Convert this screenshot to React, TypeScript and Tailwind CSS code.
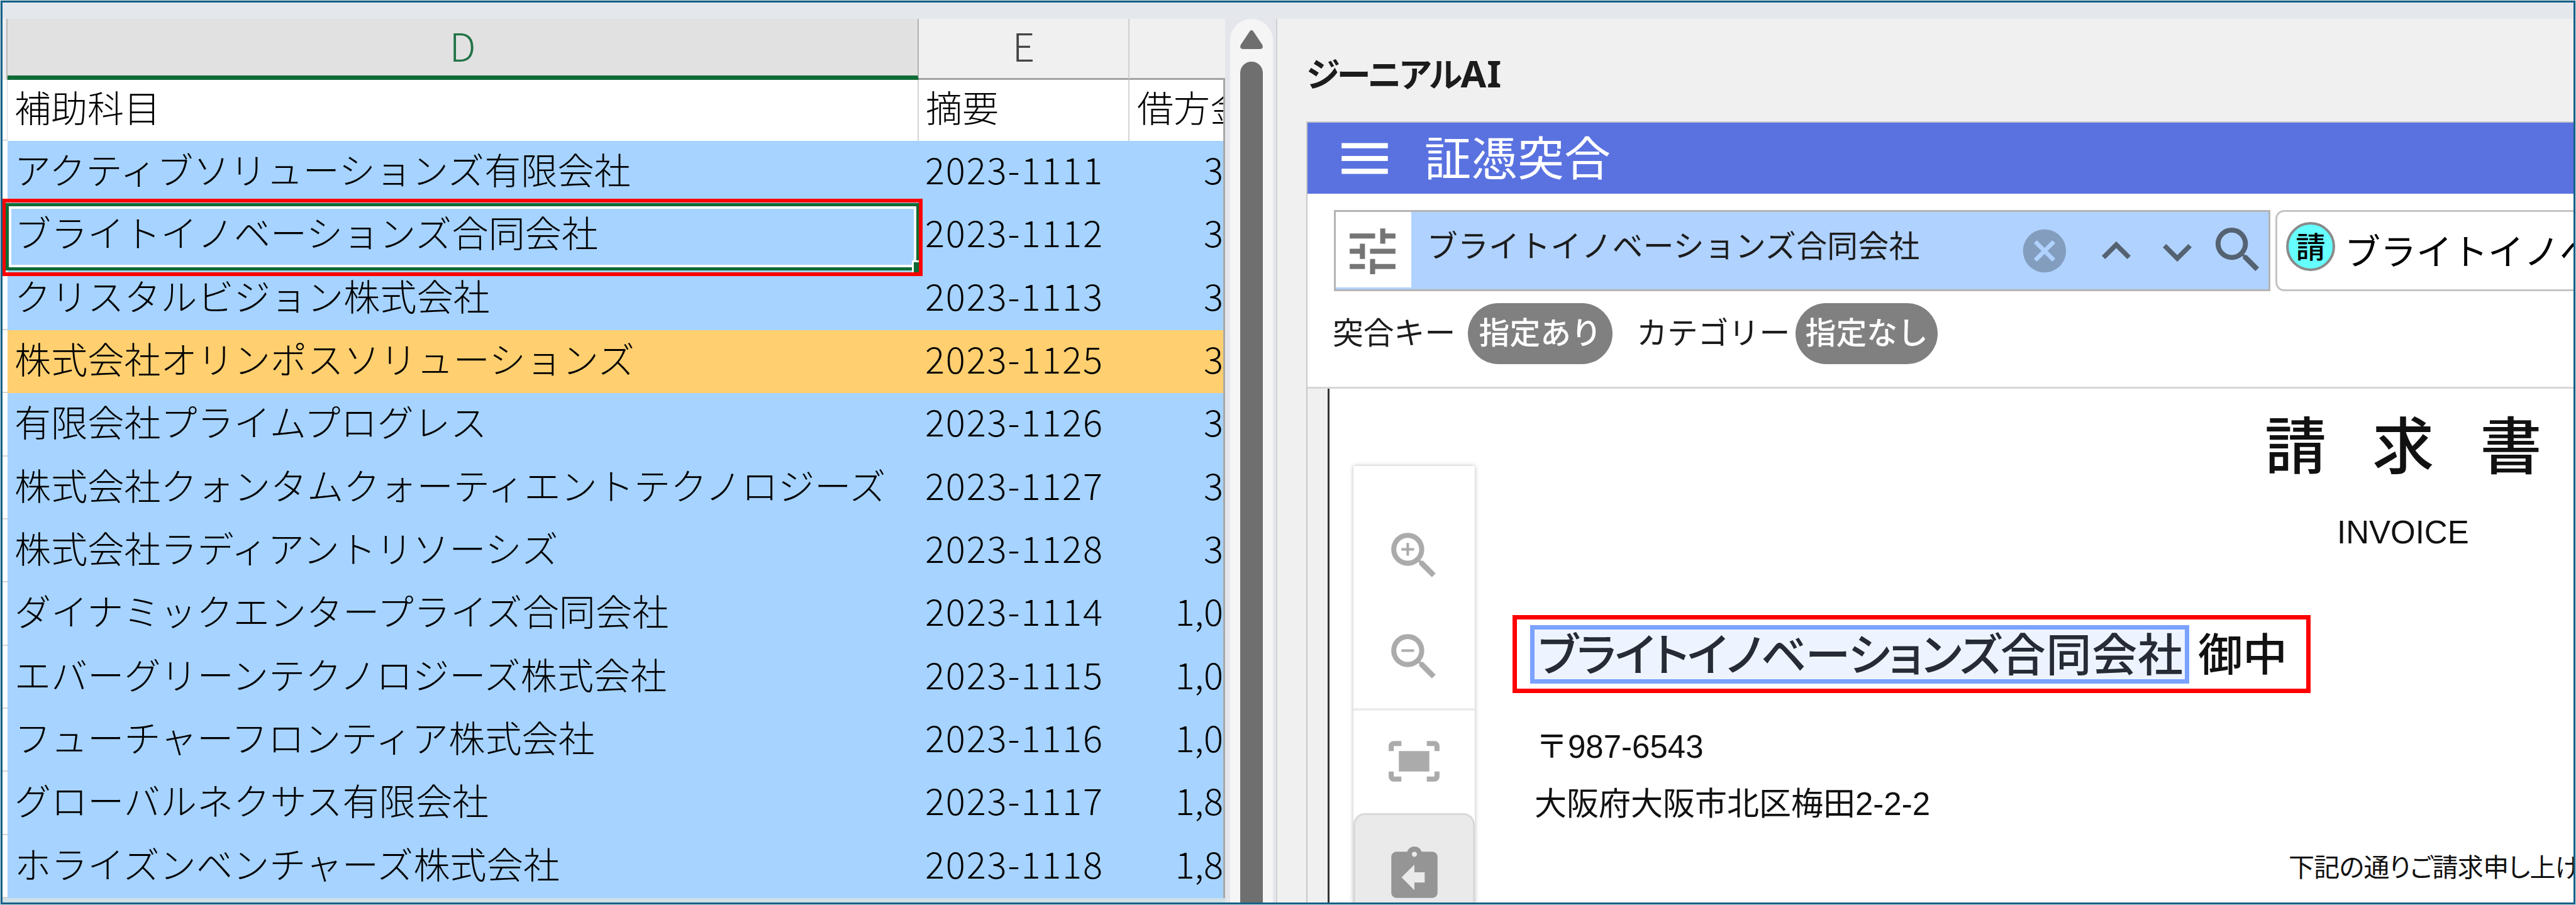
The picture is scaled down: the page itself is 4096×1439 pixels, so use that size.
import React from 'react';
import {
  MdAssignmentReturn,
  MdCancel,
  MdExpandLess,
  MdExpandMore,
  MdFitScreen,
  MdMenu,
  MdSearch,
  MdTune,
  MdZoomIn,
  MdZoomOut,
} from 'react-icons/md';

interface LedgerRow {
  account: string;
  summary: string;
  amount: string;
  flagged?: boolean;
}

const rows: LedgerRow[] = [
  { account: 'アクティブソリューションズ有限会社', summary: '2023-1111', amount: '3' },
  { account: 'ブライトイノベーションズ合同会社', summary: '2023-1112', amount: '3' },
  { account: 'クリスタルビジョン株式会社', summary: '2023-1113', amount: '3' },
  { account: '株式会社オリンポスソリューションズ', summary: '2023-1125', amount: '3', flagged: true },
  { account: '有限会社プライムプログレス', summary: '2023-1126', amount: '3' },
  { account: '株式会社クォンタムクォーティエントテクノロジーズ', summary: '2023-1127', amount: '3' },
  { account: '株式会社ラディアントリソーシズ', summary: '2023-1128', amount: '3' },
  { account: 'ダイナミックエンタープライズ合同会社', summary: '2023-1114', amount: '1,0' },
  { account: 'エバーグリーンテクノロジーズ株式会社', summary: '2023-1115', amount: '1,0' },
  { account: 'フューチャーフロンティア株式会社', summary: '2023-1116', amount: '1,0' },
  { account: 'グローバルネクサス有限会社', summary: '2023-1117', amount: '1,8' },
  { account: 'ホライズンベンチャーズ株式会社', summary: '2023-1118', amount: '1,8' },
];

function ColumnHeaders() {
  return (
    <div className="flex h-[97px] shrink-0 text-[62px] font-light leading-[83px]">
      <div className="w-2 border-r-2 border-[#b8b8b8] bg-[#ececee]" />
      <div className="w-[1449px] border-r-2 border-b-[7px] border-r-[#b0b0b0] border-b-[#0f6b35] bg-[#e1e1e1] text-center text-[#217346]">
        D
      </div>
      <div className="w-[335px] border-r-2 border-b-[3px] border-r-[#d0d0d0] border-b-[#a3a3a3] bg-[#f0f0f0] text-center text-[#444]">
        E
      </div>
      <div className="w-[152px] border-b-[3px] border-[#a3a3a3] bg-[#f0f0f0]" />
    </div>
  );
}

function SelectedCell() {
  return (
    <>
      <div className="absolute left-[5px] top-[293px] h-[107px] w-[1453px] border-[5px] border-[#0f6b35]">
        <div className="h-full border-[4px] border-white" />
      </div>
      <div className="absolute left-[1446px] top-[384px] h-[21px] w-[17px] border-l-[3px] border-t-[3px] border-white bg-[#0f6b35]" />
      <div className="absolute left-[-1px] top-[286px] h-[123px] w-[1464px] border-[6.6px] border-[#fe0000]" />
    </>
  );
}

function Sheet() {
  return (
    <div className="relative flex w-[1944px] shrink-0 flex-col overflow-hidden text-[58px] text-black">
      <ColumnHeaders />
      <div className="flex h-[97px] shrink-0 bg-white font-light leading-[85px]">
        <div className="w-2 border-b-2 border-r border-[#d4d4d4]" />
        <div className="w-[1449px] border-r-2 border-[#d4d4d4] pl-[11px]">補助科目</div>
        <div className="w-[335px] border-r-2 border-[#d4d4d4] pl-[11px]">摘要</div>
        <div className="w-[152px] overflow-hidden whitespace-nowrap border-r-[3px] border-[#a8a8a8] pl-[12px]">
          借方金額
        </div>
      </div>
      {rows.map((row) => (
        <div
          key={row.summary}
          className="flex h-[100.33px] shrink-0 whitespace-nowrap font-light leading-[89px]"
        >
          <div className="w-2 border-b-2 border-[#d4d4d4] bg-white" />
          <div
            className={`flex w-[1936px] border-r-[3px] border-[#a8a8a8] ${
              row.flagged ? 'bg-[#ffcf70]' : 'bg-[#a6d3ff]'
            }`}
          >
            <div className="w-[1449px] pl-[11px] tracking-[0.15px]">{row.account}</div>
            <div className="w-[335px] pl-[10px] tracking-[1.8px]">{row.summary}</div>
            <div className="w-[149px] text-right">{row.amount}</div>
          </div>
        </div>
      ))}
      <SelectedCell />
    </div>
  );
}

function Scrollbar() {
  return (
    <div className="flex w-[83px] shrink-0 flex-col border-r-2 border-[#cfd1d4] bg-[#e4e6ec] pl-2 pr-[5px]">
      <div className="flex flex-1 flex-col items-center rounded-t-full bg-[#f5f5f5] pt-[18px]">
        <svg className="h-[31px] w-[36px] shrink-0" viewBox="0 0 36 31" fill="#6f6f6f">
          <path d="M15 2Q18 -2 21 2L35 23Q38 30 31 30H5Q-2 30 1 23Z" />
        </svg>
        <div className="mt-[19px] w-9 flex-1 rounded-t-full bg-[#6f6f6f]" />
      </div>
    </div>
  );
}

function SearchRow() {
  return (
    <div className="flex h-[129px] gap-[8px] pl-[42px]">
      <div className="flex w-[1489px] shrink-0 border-[3px] border-[#b4b4b4] bg-[#b0d2ff] text-[#546272]">
        <div className="flex h-[120px] w-[120px] items-center justify-center bg-white text-[#757575]">
          <MdTune className="mt-1 mr-[3px] h-[97px] w-[97px]" />
        </div>
        <div className="ml-[25px] w-[906px] whitespace-nowrap text-[48.8px] leading-[102px] tracking-[0.3px] text-[#1c1c1c]">
          ブライトイノベーションズ合同会社
        </div>
        <div className="mt-[21px] flex">
          <MdCancel className="ml-[35px] h-[82px] w-[82px] text-[#839dbf]" />
          <MdExpandLess className="-mt-[5px] ml-[27px] h-[92px] w-[92px]" />
          <MdExpandMore className="-mt-[3px] ml-[5px] h-[92px] w-[92px]" />
          <MdSearch className="-mt-[8px] ml-[3px] h-[95px] w-[95px]" />
        </div>
      </div>
      <div className="flex flex-1 overflow-hidden rounded-l-[14px] border-[3px] border-r-0 border-[#c4c4c4] bg-white">
        <div className="ml-[14px] mt-[16px] h-[78px] w-[78px] shrink-0 rounded-full border-[4px] border-[#8a8a8a] bg-[#66ffff] text-center text-[47px] font-medium leading-[66px] text-black">
          請
        </div>
        <div className="ml-[15px] shrink-0 whitespace-nowrap text-[57px] leading-[118px] text-black">
          ブライトイノベーション
        </div>
      </div>
    </div>
  );
}

function FilterRow() {
  return (
    <div className="mt-[19px] flex h-[97px] whitespace-nowrap pl-[40px] text-[48.8px] leading-[88px] text-[#1c1c1c]">
      <span>突合キー</span>
      <span className="ml-[20px] w-[230px] rounded-full bg-[#808080] text-center font-medium text-white">
        指定あり
      </span>
      <span className="ml-[38px]">カテゴリー</span>
      <span className="ml-[9px] w-[226px] rounded-full bg-[#808080] text-center font-medium text-white">
        指定なし
      </span>
    </div>
  );
}

function ZoomTools() {
  return (
    <div className="absolute left-[38px] top-[123px] flex w-[193px] flex-col items-center bg-white pt-[94px] text-[#ababab] shadow-[0_0_7px_rgba(0,0,0,0.28)]">
      <MdZoomIn className="h-[97px] w-[97px]" />
      <MdZoomOut className="mt-[64px] h-[97px] w-[97px]" />
      <div className="mt-[33px] h-1 w-full bg-[#ececec]" />
      <MdFitScreen className="mt-[32px] h-[97px] w-[97px]" />
      <div className="mt-[34px] flex h-[170px] w-full justify-center rounded-t-[18px] border-[3px] border-[#d9d9d9] bg-[#eaeaea] pt-[46px] text-[#959595]">
        <MdAssignmentReturn className="h-[98px] w-[98px]" />
      </div>
    </div>
  );
}

function Invoice() {
  return (
    <div className="relative flex-1 overflow-hidden border-l-[3px] border-[#333] bg-white text-[#111]">
      <ZoomTools />
      <div className="ml-[1487px] mt-[35px] w-[600px] whitespace-nowrap text-[98px] font-medium leading-[98px] tracking-[73.2px]">
        請求書
      </div>
      <div className="ml-[1602px] mt-[66px] font-['Liberation_Sans'] text-[51px] leading-[60px]">
        INVOICE
      </div>
      <div className="ml-[291px] mt-[101px] flex h-[124px] w-[1269px] items-center border-[7px] border-[#fe0000] pl-[21px]">
        <div className="flex h-[93px] w-[1048px] shrink-0 items-center border-[7px] border-[#7aa2ff] bg-[#eef4ff] pl-[6px] text-[#262b35]">
          <span className="whitespace-nowrap pb-[10px] text-[72px] font-medium leading-[79px] tracking-[-1.8px] [font-feature-settings:'palt']">
            ブライトイノベーションズ<span className="tracking-[0.8px]">合同会社</span>
          </span>
        </div>
        <span className="ml-[14px] whitespace-nowrap pb-[10px] text-[71px] font-medium leading-[79px]">
          御中
        </span>
      </div>
      <div className="ml-[328px] mt-[56px] font-['Liberation_Sans','Noto_Sans_CJK_JP'] text-[51px] leading-[60px]">
        〒987-6543
      </div>
      <div className="ml-[326px] mt-[31px] whitespace-nowrap font-['Liberation_Sans','Noto_Sans_CJK_JP'] text-[51px] leading-[60px]">
        大阪府大阪市北区梅田2-2-2
      </div>
      <div className="ml-[1525px] mt-[37px] whitespace-nowrap text-[41px] leading-[60px] tracking-[-0.7px] [font-feature-settings:'palt']">
        下記の通りご請求申し上げます。
      </div>
    </div>
  );
}

function VoucherPanel() {
  return (
    <div className="flex min-w-0 flex-1 flex-col bg-[#f0f0f0] pl-[46px]">
      <div className="flex h-[163px] pt-[41px] text-[54px] font-bold leading-[90px] text-[#1c1c1c]">
        <span className="tracking-[-5.2px]">ジーニアル</span>
        <span className="ml-[2px] font-['Noto_Sans'] text-[59px] tracking-[1px]">AI</span>
      </div>
      <div className="flex flex-1 flex-col border-l-2 border-t-2 border-[#c8c8c8]">
        <div className="flex h-[113px] items-center bg-[#5a72e0] text-white">
          <MdMenu className="ml-[42px] h-[98px] w-[98px]" />
          <span className="ml-[46px] pb-[10px] text-[74px] leading-[100px]">証憑突合</span>
        </div>
        <div className="h-[310px] border-b-[3px] border-[#d6d6d6] bg-white pt-[26px]">
          <SearchRow />
          <FilterRow />
        </div>
        <div className="flex flex-1 pl-[32px]">
          <Invoice />
        </div>
      </div>
    </div>
  );
}

export default function App() {
  return (
    <div className="h-[1439px] w-[4096px] overflow-hidden bg-[#cfe0e6] p-px font-['Noto_Sans_CJK_JP',sans-serif]">
      <div className="flex h-full flex-col overflow-hidden border-[3px] border-[#176087]">
        <div className="h-[26px] shrink-0 bg-[#e4e7ec]" />
        <div className="flex min-h-0 flex-1">
          <Sheet />
          <Scrollbar />
          <VoucherPanel />
        </div>
      </div>
    </div>
  );
}
